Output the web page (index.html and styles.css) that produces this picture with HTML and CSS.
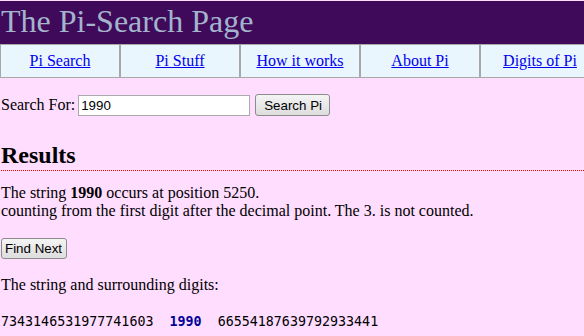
FILE: index.html
```html
<!DOCTYPE html>
<html lang="en">
<head>
  <meta charset="UTF-8" />
  <title>The Pi-Search Page</title>
  <link rel="stylesheet" href="styles.css">
</head>
<body>
  <div class="banner">
    <h1 class="banner-title">The Pi-Search Page</h1>
  </div>
  <div class="menu">
    <div class="menu-cell"><a href="#">Pi Search</a></div>
    <div class="menu-cell"><a href="#">Pi Stuff</a></div>
    <div class="menu-cell"><a href="#">How it works</a></div>
    <div class="menu-cell"><a href="#">About Pi</a></div>
    <div class="menu-cell"><a href="#">Digits of Pi</a></div>
  </div>

  <div class="content">
    <form class="search-form">
      <label for="query">Search For:</label>
      <input type="text" id="query" class="search-input" value="1990" />
      <button type="button" class="btn btn-search">Search Pi</button>
    </form>

    <h2 class="section-title">Results</h2>

    <p class="result-text">
      The string <b>1990</b> occurs at position 5250.<br>
      counting from the first digit after the decimal point. The 3. is not counted.
    </p>

    <p class="result-actions">
      <button type="button" class="btn btn-next">Find Next</button>
    </p>

    <p class="result-text">The string and surrounding digits:</p>

    <p class="digits">7343146531977741603&nbsp; <b class="match">1990</b> &nbsp;66554187639792933441</p>
  </div>
</body>
</html>
```

FILE: styles.css
```css
body {
  margin: 0;
  padding-top: 1px;
  background-color: #ffddff;
  color: #000000;
  font-family: "Liberation Serif", "Times New Roman", serif;
  font-size: 16px;
}

.banner {
  background-color: #3f0a5a;
  height: 43px;
  padding-left: 1px;
}

.banner-title {
  margin: 0;
  font-size: 32px;
  font-weight: normal;
  line-height: 41px;
  color: #a3b4cc;
}

.menu {
  display: flex;
  width: 600px;
}

.menu-cell {
  width: 118px;
  border: 1px solid #a8a8a8;
  background-color: #eaf6fe;
  text-align: center;
  line-height: 32px;
}

.menu-cell a {
  color: #0000ee;
}

.content {
  padding-left: 1px;
}

.search-form {
  margin: 16px 0;
  display: flex;
  align-items: center;
}

.search-input {
  margin: 0 5px 0 3px;
  width: 166px;
  height: 17px;
  padding: 1px 2px;
  border: 1px solid #a9a9a9;
  font-family: Arial, "Liberation Sans", sans-serif;
  font-size: 13.33px;
}

.btn {
  height: 22px;
  border: 1px solid #8c8c8c;
  border-radius: 3px;
  background: linear-gradient(#f4f4f4, #dddddd);
  font-family: Arial, "Liberation Sans", sans-serif;
  font-size: 13.33px;
  color: #000000;
}

.btn-search {
  padding: 1px 7px 1px 8px;
}

.btn-next {
  height: 21px;
  padding: 1px 4px 1px 3px;
}

.section-title {
  margin: 26px 0 0;
  padding-bottom: 1px;
  font-size: 24px;
  border-bottom: 1px dotted #e00000;
}

.result-text {
  margin: 13px 0 16px;
}

.result-actions {
  margin: 18px 0 17px;
}

.digits {
  margin: 20px 0 0;
  font-family: "DejaVu Sans Mono", monospace;
  font-size: 13.33px;
}

.match {
  color: #000099;
}
```
